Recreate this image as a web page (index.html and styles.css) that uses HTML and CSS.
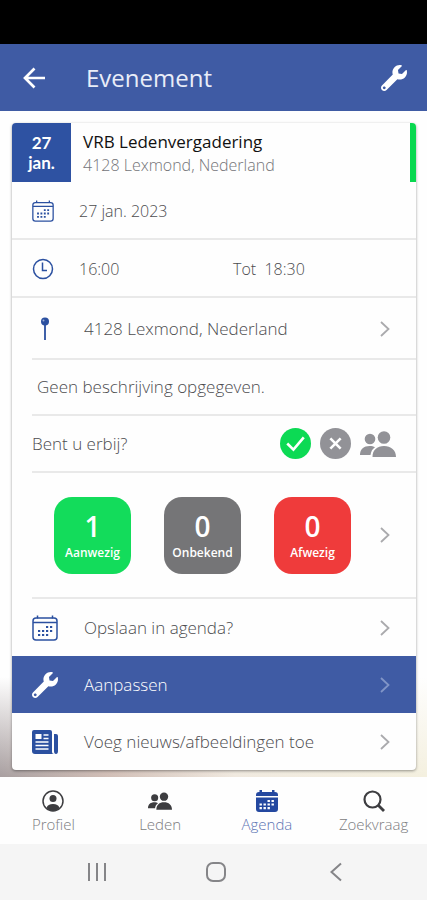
FILE: index.html
```html
<!DOCTYPE html>
<html lang="nl">
<head>
<meta charset="utf-8">
<meta name="viewport" content="width=device-width, initial-scale=1">
<title>Evenement</title>
<link rel="stylesheet" href="styles.css">
</head>
<body>
<svg class="defs" aria-hidden="true">
  <symbol id="wrench" viewBox="0 0 512 512"><path fill="currentColor" d="M507.73 109.1c-2.24-9.03-13.54-12.09-20.12-5.51l-74.36 74.36-67.88-11.31-11.31-67.88 74.36-74.36c6.62-6.62 3.43-17.9-5.66-20.16-47.38-11.74-99.55.91-136.58 37.93-39.64 39.64-50.55 97.1-34.05 147.2L18.74 402.76c-24.99 24.99-24.99 65.51 0 90.5 24.99 24.99 65.51 24.99 90.5 0l213.21-213.21c50.12 16.71 107.47 5.68 147.37-34.22 37.07-37.07 49.7-89.32 37.91-136.73zM64 478c-16 0-28-12-28-28s12-28 28-28 28 12 28 28-12 28-28 28z"/></symbol>
  <symbol id="calendar" viewBox="0 0 26 26">
    <g fill="none" stroke="currentColor" stroke-width="1.5"><rect x="1" y="3" width="24" height="22" rx="3"/><path d="M1 7.500h24M5.500 .5v3M20.500 .5v3"/></g>
    <path fill="none" stroke="currentColor" stroke-width="2.200" stroke-dasharray="2.200 1.800" d="M14 12h7M6 16h15M6 20h11"/>
  </symbol>
  <symbol id="people" viewBox="0 0 36 26"><g fill="currentColor"><circle cx="10" cy="8" r="5.300"/><circle cx="24" cy="6.500" r="6.300"/><path d="M0 24c0-6 4-9 9.500-9 2.500 0 4 .5 5.500 1.300-2.500 1.700-4 4-4.500 7.700zM12.500 26c0-7 4.500-11 11.500-11s12 4 12 11z"/></g></symbol>
  <symbol id="chevron" viewBox="0 0 10 16"><path d="M1 1l7.500 7L1 15" fill="none" stroke="currentColor" stroke-width="1.800"/></symbol>
</svg>

<div class="status"></div>
<header class="topbar">
  <button class="plain" aria-label="Terug"><svg class="i-back" viewBox="0 0 22 22"><path d="M11.500 1.500L2 11l9.500 9.500M2 11h20" fill="none" stroke="currentColor" stroke-width="2.700"/></svg></button>
  <h1>Evenement</h1>
  <button class="plain" aria-label="Aanpassen"><svg class="i-tool"><use href="#wrench"/></svg></button>
</header>

<main>
  <article class="card">
    <div class="event">
      <div class="date"><span>27</span><span>jan.</span></div>
      <div class="title"><h2>VRB Ledenvergadering</h2><p>4128 Lexmond, Nederland</p></div>
    </div>
    <div class="row full"><span class="slot near"><svg class="i-small"><use href="#calendar"/></svg></span><span>27 jan. 2023</span></div>
    <div class="row full"><span class="slot near"><svg class="i-small" viewBox="0 0 22 22"><g fill="none" stroke="currentColor" stroke-width="1.500"><circle cx="11" cy="11" r="9.500"/><path d="M10.500 4.500v8H15"/></g></svg></span><span class="from">16:00</span><span>Tot&nbsp; 18:30</span></div>
    <a class="row tall" href="#"><span class="slot"><svg class="i-pin" viewBox="0 0 26 24"><circle cx="13" cy="4.500" r="4" fill="currentColor"/><circle cx="11.500" cy="3.500" r="1" fill="#9fb0d8"/><path d="M13 8v15" stroke="currentColor" stroke-width="1.800"/></svg></span><span class="grow">4128 Lexmond, Nederland</span><svg class="chev"><use href="#chevron"/></svg></a>
    <div class="row about">Geen beschrijving opgegeven.</div>
    <div class="row rsvp"><span class="grow">Bent u erbij?</span>
      <button class="round yes" aria-label="Ja"><svg viewBox="0 0 30 30"><path d="M7 15l6 6L23 9" fill="none" stroke="currentColor" stroke-width="2.500"/></svg></button>
      <button class="round no" aria-label="Nee"><svg viewBox="0 0 30 30"><path d="M10 10l10 10M20 10L10 20" fill="none" stroke="currentColor" stroke-width="2.500"/></svg></button>
      <button class="plain group" aria-label="Leden"><svg><use href="#people"/></svg></button>
    </div>
    <a class="row stats" href="#">
      <span class="tiles">
        <span class="tile present"><b>1</b><span>Aanwezig</span></span>
        <span class="tile unknown"><b>0</b><span>Onbekend</span></span>
        <span class="tile absent"><b>0</b><span>Afwezig</span></span>
      </span>
      <svg class="chev"><use href="#chevron"/></svg>
    </a>
    <a class="row action" href="#"><span class="slot"><svg class="i-tool"><use href="#calendar"/></svg></span><span class="grow">Opslaan in agenda?</span><svg class="chev"><use href="#chevron"/></svg></a>
    <a class="row action active" href="#"><span class="slot"><svg class="i-tool"><use href="#wrench"/></svg></span><span class="grow">Aanpassen</span><svg class="chev"><use href="#chevron"/></svg></a>
    <a class="row action" href="#"><span class="slot"><svg class="i-tool" viewBox="0 0 26 26"><path fill="currentColor" d="M2 1h16q2 0 2 2v20q0 2 2 2H3q-3 0-3-3V3q0-2 2-2zM22 5h2q2 0 2 2v15q0 3-2 3t-2-3z"/><path fill="#fff" d="M3.500 5h6v5h-6z"/><path d="M11.500 6h5M11.500 9.500h5M3.500 13h13M3.500 16.500h13M3.500 20h13" stroke="#fff" stroke-width="1.600"/></svg></span><span class="grow">Voeg nieuws/afbeeldingen toe</span><svg class="chev"><use href="#chevron"/></svg></a>
  </article>
</main>

<nav class="tabs">
  <a href="#"><svg viewBox="0 0 22 22"><circle cx="11" cy="11" r="10" fill="none" stroke="currentColor" stroke-width="1.500"/><circle cx="11" cy="8.500" r="3.500" fill="currentColor"/><path d="M4.500 18c1-3 3-4 6.500-4s5.500 1 6.500 4c-4 4-9 4-13 0z" fill="currentColor"/></svg><span>Profiel</span></a>
  <a href="#"><svg class="wide"><use href="#people"/></svg><span>Leden</span></a>
  <a href="#" class="current"><svg class="wide" viewBox="0 0 24 22"><path fill="currentColor" d="M1 5q0-3 3-3h16q3 0 3 3v1H1zM1 7.500h22V19q0 3-3 3H4q-3 0-3-3zM4.500 0h2.500v4H4.500zM17 0h2.500v4H17z"/><path d="M12.500 11h8M4.500 14.500h16M4.500 18.200h12" stroke="#fff" stroke-width="2.200" stroke-dasharray="2.400 1.600"/></svg><span>Agenda</span></a>
  <a href="#"><svg viewBox="0 0 22 22"><circle cx="9.500" cy="9.500" r="8" fill="none" stroke="currentColor" stroke-width="2.200"/><path d="M15 15l6 6" stroke="currentColor" stroke-width="2.800"/></svg><span>Zoekvraag</span></a>
</nav>
<div class="system">
  <button class="plain" aria-label="Recente apps"><svg viewBox="0 0 20 20"><path d="M2 1v18M10 1v18M18 1v18" stroke="currentColor" stroke-width="2"/></svg></button>
  <button class="plain" aria-label="Start"><svg viewBox="0 0 20 20"><rect x="1" y="1" width="18" height="18" rx="6" fill="none" stroke="currentColor" stroke-width="2"/></svg></button>
  <button class="plain" aria-label="Vorige"><svg viewBox="0 0 20 20"><path d="M15 1.500L5.500 10l9.500 8.500" fill="none" stroke="currentColor" stroke-width="2"/></svg></button>
</div>
</body>
</html>
```
FILE: styles.css
```css
* { box-sizing: border-box; }
body {
  margin: 0;
  min-height: 100vh;
  display: flex;
  flex-direction: column;
  font: 300 17px/20px "Open Sans", "Noto Sans", sans-serif;
  color: #4c4c4f;
  background: #fefefe;
}
h1, h2, p { margin: 0; font-weight: inherit; }
a { color: inherit; text-decoration: none; }
svg { display: block; flex: none; }
.defs { position: absolute; width: 0; height: 0; }
.plain { border: 0; padding: 0; background: none; color: inherit; }
.grow { flex: 1; }

.status { height: 44px; background: #000; }
.topbar {
  display: flex;
  align-items: center;
  height: 67px;
  padding: 0 20px 0 23px;
  background: #3f5ba4;
  color: #fff;
  box-shadow: 0 1px 4px #0004;
}
.topbar h1 { flex: 1; padding-left: 41px; font-size: 24px; line-height: 32px; font-weight: 400; color: #e9edf8; }
.i-back { width: 22px; height: 22px; }
.i-tool { width: 26px; height: 26px; }
.i-small { width: 22px; height: 22px; }
.i-pin { width: 26px; height: 24px; }

main {
  flex: 1;
  padding: 12px 11px 7px 12px;
  background:
    linear-gradient(#fefefe calc(100% - 100px), #fefefe00),
    linear-gradient(90deg, #a89fa0, #d0bdb5 25%, #f0e9df 55%, #f4f0df);
}
.card { background: #fefefe; border-radius: 4px; box-shadow: 0 1px 3px #0006; overflow: hidden; }
.event { display: flex; height: 59px; border-right: 6px solid #08d84f; }
.date {
  width: 59px;
  display: flex;
  flex-direction: column;
  justify-content: center;
  text-align: center;
  background: #2e52a2;
  color: #fff;
  font: 700 17px/20px Lato, sans-serif;
}
.title { padding: 8px 12px; }
.title h2 { font-size: 17px; font-weight: 400; line-height: 22px; color: #111; }
.title p { font-size: 16px; line-height: 24px; color: #747478; }

.row {
  display: flex;
  align-items: center;
  min-height: 57px;
  margin-left: 20px;
  padding-right: 26px;
  border-bottom: 2px solid #e9e9e9;
}
.full { min-height: 58px; margin-left: 0; padding-left: 20px; padding-top: 2px; font-size: 16px; }
.slot { width: 52px; color: #2b50a0; }
.near { width: 47px; }
.from { width: 154px; }
.tall { min-height: 62px; padding-top: 2px; }
.about { min-height: 56px; padding-left: 5px; }
.rsvp { gap: 9px; padding-right: 20px; }
.round { width: 31px; height: 31px; border: 0; border-radius: 50%; padding: 0; color: #fff; }
.yes { background: #0cda54; }
.no { background: #929297; }
.group { color: #929297; }
.group svg { width: 36px; height: 26px; }
.stats { min-height: 126px; padding-left: 22px; justify-content: space-between; }
.tiles { display: flex; gap: 33px; }
.tile {
  width: 77px;
  height: 77px;
  border-radius: 18px;
  display: flex;
  flex-direction: column;
  align-items: center;
  justify-content: center;
  gap: 2px;
  padding-top: 2px;
  color: #fff;
  font-weight: 600;
  font-size: 12px;
  line-height: 18px;
}
.tile b { font-size: 28px; line-height: 32px; font-weight: 600; }
.present { background: #13dc5b; }
.unknown { background: #757577; }
.absent { background: #ef3b3b; }
.chev { width: 10px; height: 16px; color: #aaaaad; }
.action { margin-left: 0; padding-left: 20px; border: 0; }
.active { background: #3f5ba4; color: #fff; }
.active .slot { color: #fff; }
.active .chev { color: #8195c7; }

.tabs { display: grid; grid-template-columns: repeat(4, 1fr); height: 67px; background: #fefefe; }
.tabs a { display: flex; flex-direction: column; align-items: center; padding-top: 13px; gap: 2px; color: #3d3d40; }
.tabs svg { width: 22px; height: 22px; }
.tabs .wide { width: 24px; }
.tabs span { font-size: 15px; line-height: 20px; color: #7c7c80; }
.tabs .current { color: #2448a0; }
.tabs .current span { color: #6075b4; }
.system { display: flex; align-items: center; justify-content: space-around; height: 56px; padding: 0 31px 0 37px; background: #f5f5f5; color: #858588; }
.system svg { width: 20px; height: 20px; }
```
